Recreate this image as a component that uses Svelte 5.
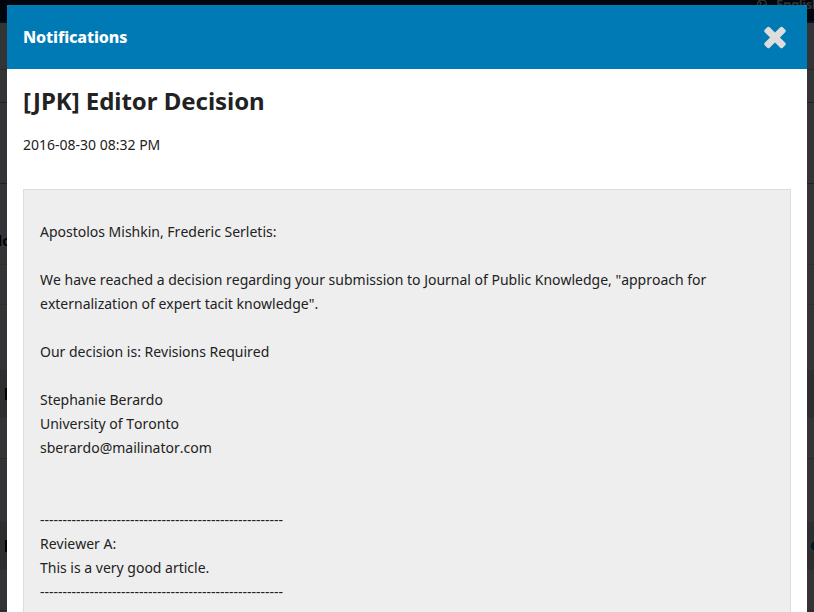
<script>
  const heading = '[JPK] Editor Decision';
  const date = '2016-08-30 08:32 PM';
  const rule = '-'.repeat(54);
  const message = [
    'Apostolos Mishkin, Frederic Serletis:',
    '',
    'We have reached a decision regarding your submission to Journal of Public Knowledge, "approach for',
    'externalization of expert tacit knowledge".',
    '',
    'Our decision is: Revisions Required',
    '',
    'Stephanie Berardo',
    'University of Toronto',
    'sberardo@mailinator.com',
    '',
    '',
    rule,
    'Reviewer A:',
    'This is a very good article.',
    rule,
    ''
  ].join('\n');
  // Heights of the dimmed page rows behind the modal.
  const rows = [
    { h: 47, line: 'mid' },
    { h: 33, line: 'strong' },
    { h: 81, line: 'strong' },
    { h: 81, line: 'soft', label: 'lc' },
    { h: 40, line: 'soft' },
    { h: 65, line: 'none' },
    { h: 48, line: 'none', band: true, tab: true },
    { h: 41, line: 'mid' },
    { h: 63, line: 'none' },
    { h: 48, line: 'none', band: true, tab: true, dot: true },
    { h: 41, line: 'mid' }
  ];
</script>

<div class="screen">
  <div class="page" aria-hidden="true">
    <div class="topbar">
      <svg class="globe" width="12" height="12" viewBox="0 0 12 12">
        <circle cx="6" cy="5.5" r="4.5" />
        <path d="M3 2.500l2 1.500-1 2M8 5l2 2" />
      </svg>
      <span>English</span>
    </div>
    {#each rows as row}
      <div class="row {row.line}" class:band={row.band} style:height="{row.h}px">
        {#if row.label}<span class="label">{row.label}</span>{/if}
        {#if row.tab}<i class="tab"></i>{/if}
        {#if row.dot}<i class="dot"></i>{/if}
      </div>
    {/each}
  </div>

  <section class="modal">
    <header>
      <h2>Notifications</h2>
      <button aria-label="Close">
        <svg width="22" height="22" viewBox="288 326 1216 1216">
          <path d="M1490 1322q0 40-28 68l-136 136q-28 28-68 28t-68-28l-294-294-294 294q-28 28-68 28t-68-28l-136-136q-28-28-28-68t28-68l294-294-294-294q-28-28-28-68t28-68l136-136q28-28 68-28t68 28l294 294 294-294q28-28 68-28t68 28l136 136q28 28 28 68t-28 68l-294 294 294 294q28 28 28 68z" />
        </svg>
      </button>
    </header>
    <div class="content">
      <h1>{heading}</h1>
      <p class="date">{date}</p>
      <div class="message">{message}</div>
    </div>
  </section>
</div>

<style>
  :global(body) {
    margin: 0;
    overflow: hidden;
  }
  .screen {
    position: relative;
    width: 814px;
    height: 612px;
    overflow: hidden;
    background: #333435;
    color: #222;
    font: 14px/24px "Noto Sans", sans-serif;
  }
  .page {
    position: absolute;
    inset: 0;
  }
  .topbar {
    box-sizing: border-box;
    height: 23px;
    display: flex;
    gap: 8px;
    padding-left: 756px;
    background: #00060c;
    border-bottom: 2px solid #00141e;
    color: #333;
    font-size: 13px;
    font-weight: 700;
    line-height: 8px;
    letter-spacing: -0.4px;
    white-space: nowrap;
  }
  .globe {
    flex: none;
    margin-top: -1px;
    fill: none;
    stroke: #333;
    stroke-width: 1.5;
  }
  .row {
    position: relative;
    box-sizing: border-box;
    border-bottom: 1px solid transparent;
  }
  .strong { border-color: #202122; }
  .mid { border-color: #282929; }
  .soft { border-color: #2d2e2e; }
  .none { border-bottom: 0; }
  .band { background: #2d2e2f; }
  .label {
    position: absolute;
    left: -2px;
    top: 45px;
    color: #000;
    font-weight: 700;
  }
  .tab {
    position: absolute;
    left: 5px;
    top: 18px;
    width: 2px;
    height: 12px;
    background: #000;
  }
  .dot {
    position: absolute;
    left: 811px;
    top: 19px;
    width: 10px;
    height: 10px;
    border-radius: 50%;
    background: #001723;
  }
  .modal {
    position: relative;
    width: 800px;
    height: 607px;
    margin: 5px 7px 0;
    overflow: hidden;
    background: #fff;
    border-radius: 2px 2px 0 0;
  }
  header {
    display: flex;
    align-items: center;
    justify-content: space-between;
    height: 64px;
    box-sizing: border-box;
    padding: 0 21px 0 16px;
    background: #007ab5;
  }
  h2 {
    margin: 0;
    color: #fff;
    font-size: 16px;
    line-height: 24px;
    font-weight: 800;
    letter-spacing: -0.12px;
  }
  button {
    width: 22px;
    height: 22px;
    padding: 0;
    border: 0;
    background: none;
  }
  button svg {
    display: block;
    overflow: visible;
    fill: #ddd;
  }
  .content {
    padding: 16px;
  }
  h1 {
    margin: 0;
    font-size: 24px;
    line-height: 32px;
    letter-spacing: -0.04px;
  }
  .date {
    margin: 16px 0 32px;
  }
  .message {
    border: 1px solid #ddd;
    padding: 30px 16px 16px;
    background: #eee;
    white-space: pre-wrap;
    font-kerning: none;
    letter-spacing: -0.007px;
  }
</style>
